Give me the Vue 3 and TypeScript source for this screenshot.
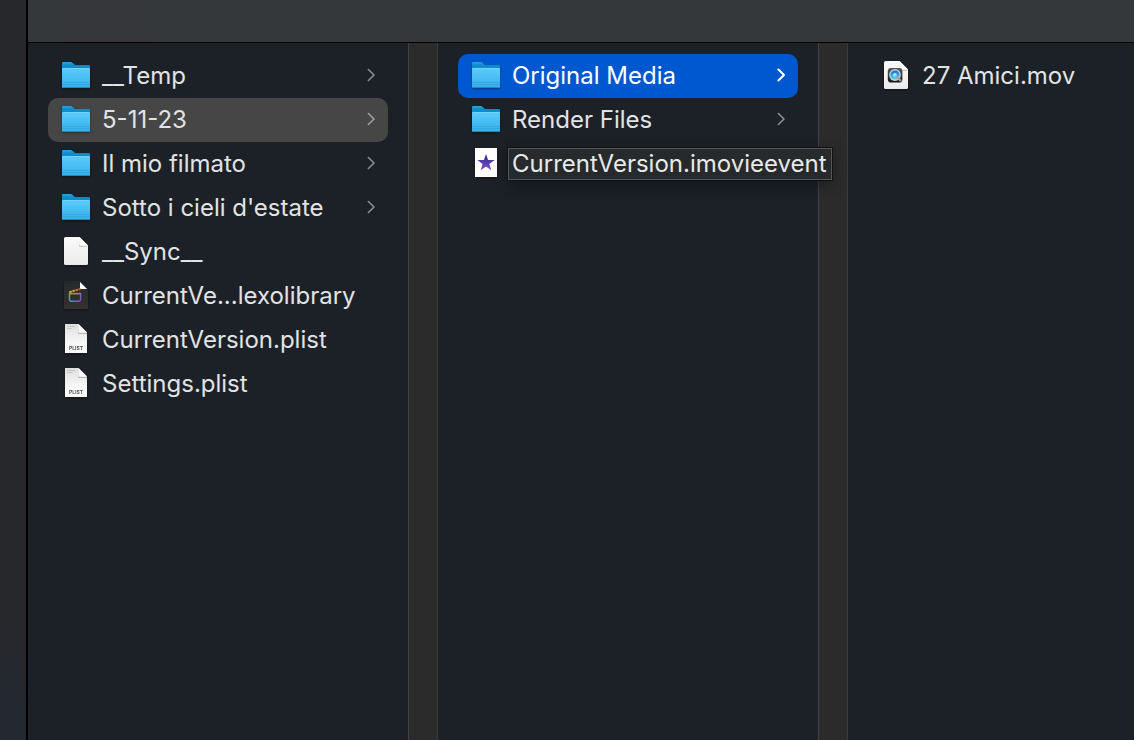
<script setup lang="ts">
type Kind = 'folder' | 'blank' | 'library' | 'plist' | 'event' | 'movie'

interface Entry {
  name: string
  kind: Kind
  state?: 'path' | 'active'
  expanded?: boolean
}

const columns: Entry[][] = [
  [
    { name: '__Temp', kind: 'folder' },
    { name: '5-11-23', kind: 'folder', state: 'path' },
    { name: 'Il mio filmato', kind: 'folder' },
    { name: "Sotto i cieli d'estate", kind: 'folder' },
    { name: '__Sync__', kind: 'blank' },
    { name: 'CurrentVe...lexolibrary', kind: 'library' },
    { name: 'CurrentVersion.plist', kind: 'plist' },
    { name: 'Settings.plist', kind: 'plist' },
  ],
  [
    { name: 'Original Media', kind: 'folder', state: 'active' },
    { name: 'Render Files', kind: 'folder' },
    { name: 'CurrentVersion.imovieevent', kind: 'event', expanded: true },
  ],
  [{ name: '27 Amici.mov', kind: 'movie' }],
]
</script>

<template>
  <div class="window">
    <svg class="defs" aria-hidden="true">
      <defs>
        <linearGradient id="folderBack" x1="0" y1="0" x2="0" y2="1">
          <stop offset="0" stop-color="#2fa5e0" />
          <stop offset="0.3" stop-color="#0f8ccb" />
        </linearGradient>
        <linearGradient id="folderFront" x1="0" y1="0" x2="0" y2="1">
          <stop offset="0" stop-color="#5bcbfb" />
          <stop offset="1" stop-color="#36b0ea" />
        </linearGradient>
        <linearGradient id="paper" x1="0" y1="0" x2="0" y2="1">
          <stop offset="0" stop-color="#fafafa" />
          <stop offset="1" stop-color="#ebebeb" />
        </linearGradient>
        <linearGradient id="plistPaper" x1="0" y1="0" x2="0" y2="1">
          <stop offset="0" stop-color="#dedede" />
          <stop offset="0.7" stop-color="#fafafa" />
        </linearGradient>
        <linearGradient id="darkPaper" x1="0" y1="0" x2="0" y2="1">
          <stop offset="0" stop-color="#26292b" />
          <stop offset="1" stop-color="#333130" />
        </linearGradient>
        <linearGradient id="starFill" x1="0" y1="0" x2="0" y2="1">
          <stop offset="0" stop-color="#2b2b8f" />
          <stop offset="1" stop-color="#8150c8" />
        </linearGradient>
        <linearGradient id="clapTop" gradientUnits="userSpaceOnUse" x1="7" y1="12" x2="19" y2="9">
          <stop offset="0" stop-color="#d8c23a" />
          <stop offset="0.5" stop-color="#e07a3a" />
          <stop offset="1" stop-color="#cf4a4a" />
        </linearGradient>
        <linearGradient id="clapBody" gradientUnits="userSpaceOnUse" x1="8" y1="13" x2="19" y2="21">
          <stop offset="0" stop-color="#52c653" />
          <stop offset="0.35" stop-color="#35a9b8" />
          <stop offset="0.65" stop-color="#5a6fdc" />
          <stop offset="1" stop-color="#9a45c9" />
        </linearGradient>
        <linearGradient id="lensFrame" x1="0" y1="0" x2="0" y2="1">
          <stop offset="0" stop-color="#55585c" />
          <stop offset="1" stop-color="#141619" />
        </linearGradient>
        <linearGradient id="lens" x1="0" y1="0" x2="0" y2="1">
          <stop offset="0" stop-color="#1668e8" />
          <stop offset="1" stop-color="#4fe0f5" />
        </linearGradient>
      </defs>
    </svg>

    <aside class="sidebar"></aside>
    <main class="browser">
      <header class="toolbar"></header>
      <div class="columns">
        <ul v-for="(entries, c) in columns" :key="c" class="column">
          <li v-for="entry in entries" :key="entry.name">
            <button type="button" class="row" :class="entry.state">
              <svg class="icon" viewBox="0 0 28 30" aria-hidden="true">
                <g v-if="entry.kind === 'folder'">
                  <path d="M0 3.2Q0 2 1.2 2H8.6Q9.6 2 10.4 2.7L12.4 4.4Q13 5 14 5H27Q28 5 28 6V12H0Z" fill="url(#folderBack)" />
                  <path d="M0 9Q0 8 1 8H27Q28 8 28 9V27Q28 28 27 28H1Q0 28 0 27Z" fill="url(#folderFront)" />
                  <path d="M0.5 8.5H27.5" stroke="#79d8ff" opacity="0.7" />
                  <path d="M0 22.5H28M0 24.5H28" stroke="#2598d4" opacity="0.4" />
                  <path d="M0.5 27.5H27.5" stroke="#178ac5" />
                </g>
                <g v-else-if="entry.kind === 'blank'">
                  <path d="M2 2.5Q2 1 3.5 1H17.5L26 9.5V27.5Q26 29 24.5 29H3.5Q2 29 2 27.5Z" fill="url(#paper)" />
                  <path d="M17.5 1V8Q17.5 9.5 19 9.5H26L24.6 11H18Q17 11 17 10Z" fill="#c9c9c9" />
                  <path d="M17.5 1L26 9.5H19Q17.5 9.5 17.5 8Z" fill="#fff" />
                </g>
                <g v-else-if="entry.kind === 'library'">
                  <path d="M2 2.5Q2 1 3.5 1H18L26 9V27.5Q26 29 24.5 29H3.5Q2 29 2 27.5Z" fill="url(#darkPaper)" />
                  <path d="M18 2L25 9H18Z" fill="#fff" />
                  <path d="M7.3 12.1L18.6 9" stroke="url(#clapTop)" stroke-width="2" stroke-dasharray="2.6 .6" />
                  <path d="M7.5 13.6H18.6V19.6Q18.6 21.2 17 21.2H9.1Q7.5 21.2 7.5 19.6Z" fill="none" stroke="url(#clapBody)" stroke-width="1.4" />
                  <path d="M7.5 13.6H18.6" stroke="#b9803b" stroke-width="1.8" stroke-dasharray="2.4 .8" />
                </g>
                <g v-else-if="entry.kind === 'plist'">
                  <path d="M3 0H16.5L25 8.5V29H3Z" fill="url(#plistPaper)" />
                  <path d="M5 2.5H13M5 4.5H10" stroke="#bcbcbc" stroke-width=".8" />
                  <path d="M16.5 0V7.5Q16.5 9 18 9H25V10H17.5Q16 10 16 8.5Z" fill="#b5b5b5" />
                  <path d="M16.5 0L25 8.5H18Q16.5 8.5 16.5 7Z" fill="#f8f8f8" />
                  <text x="14" y="26" text-anchor="middle" class="badge">PLIST</text>
                </g>
                <g v-else-if="entry.kind === 'event'">
                  <rect x="3" y="0" width="22" height="29" fill="#fff" />
                  <path d="M14 6L16.1 12H22.6L17.4 15.9L19.3 22.2L14 18.4L8.7 22.2L10.6 15.9L5.4 12H11.9Z" fill="url(#starFill)" />
                </g>
                <g v-else>
                  <path d="M2 2.5Q2 1 3.5 1H17.5L26 9.5V27.5Q26 29 24.5 29H3.5Q2 29 2 27.5Z" fill="url(#paper)" />
                  <path d="M17.5 1V8Q17.5 9.5 19 9.5H26L24.6 11H18Q17 11 17 10Z" fill="#c9c9c9" />
                  <path d="M17.5 1L26 9.5H19Q17.5 9.5 17.5 8Z" fill="#fff" />
                  <rect x="5.8" y="8" width="14.6" height="14.6" rx="3.4" fill="url(#lensFrame)" />
                  <circle cx="13" cy="15" r="5.9" fill="#c9ced4" />
                  <circle cx="13" cy="15" r="4.6" fill="url(#lens)" />
                  <circle cx="13" cy="15" r="1.9" fill="#a9eef8" />
                  <path d="M13.6 15.6L19 21" stroke="#9ba1a8" stroke-width="2.4" />
                </g>
              </svg>
              <span class="name" :class="{ expanded: entry.expanded }">{{ entry.name }}</span>
              <svg v-if="entry.kind === 'folder'" class="chevron" viewBox="0 0 8 14" aria-hidden="true">
                <path d="M1.4 1.5L7 7L1.4 12.5" />
              </svg>
            </button>
          </li>
        </ul>
      </div>
    </main>
  </div>
</template>

<style>
body {
  margin: 0;
  background: #1c2127;
}
</style>

<style scoped>
.window {
  display: flex;
  min-height: 100vh;
  font-family: Inter, "Liberation Sans", sans-serif;
  overflow: hidden;
}
.defs {
  position: absolute;
  width: 0;
  height: 0;
}
.sidebar {
  flex: 0 0 26px;
  background: linear-gradient(#27282c 85%, #242830 95%);
  border-right: 2px solid #000;
}
.browser {
  flex: 1;
  min-width: 0;
  display: flex;
  flex-direction: column;
}
.toolbar {
  height: 42px;
  background: linear-gradient(90deg, #34383a, #37373a 8%, #34383a 14%);
  border-bottom: 1px solid #000;
}
.columns {
  flex: 1;
  display: grid;
  grid-template-columns: 410fr 410fr 286fr;
  background: #1c2127;
}
.column {
  min-width: 0;
  margin: 0;
  padding: 11px 20px;
  list-style: none;
}
.column:not(:last-child) {
  padding-right: 50px;
  background: linear-gradient(90deg, #414141 1px, #2b2b2b 1px 29px, #3a3b3c 29px) right / 30px 100% no-repeat;
}
.row {
  display: flex;
  align-items: center;
  gap: 12px;
  width: 100%;
  height: 44px;
  padding: 0 13px 0 14px;
  border: 0;
  border-radius: 10px;
  background: none;
  color: #e2e3e4;
  font: 420 24px/30px Inter, "Liberation Sans", sans-serif;
  text-align: left;
}
.row.path {
  background: #464646;
}
.row.active {
  background: #0058d0;
  color: #fff;
}
.icon {
  flex: none;
  width: 28px;
  height: 30px;
  margin-bottom: 2px;
  filter: drop-shadow(0 1px 1px #0006);
}
.badge {
  font: 700 5px Inter, sans-serif;
  fill: #555;
}
.name {
  flex: 1;
  white-space: nowrap;
}
.name.expanded {
  position: relative;
  z-index: 1;
  flex: none;
  margin-left: -4px;
  padding: 0 4px 0 3px;
  border: 1px solid #545657;
  background: #262a2c;
  outline: 1px solid #111416;
  box-shadow: 0 4px 14px #0006;
  color: #e8e9e9;
}
.chevron {
  flex: none;
  width: 8px;
  height: 14px;
  margin-bottom: 2px;
  fill: none;
  stroke: #8c8e90;
  stroke-width: 1.6;
  stroke-linecap: round;
  stroke-linejoin: round;
}
.path .chevron {
  stroke: #a0a0a0;
}
.active .chevron {
  stroke: #fff;
  stroke-width: 2;
}
</style>
